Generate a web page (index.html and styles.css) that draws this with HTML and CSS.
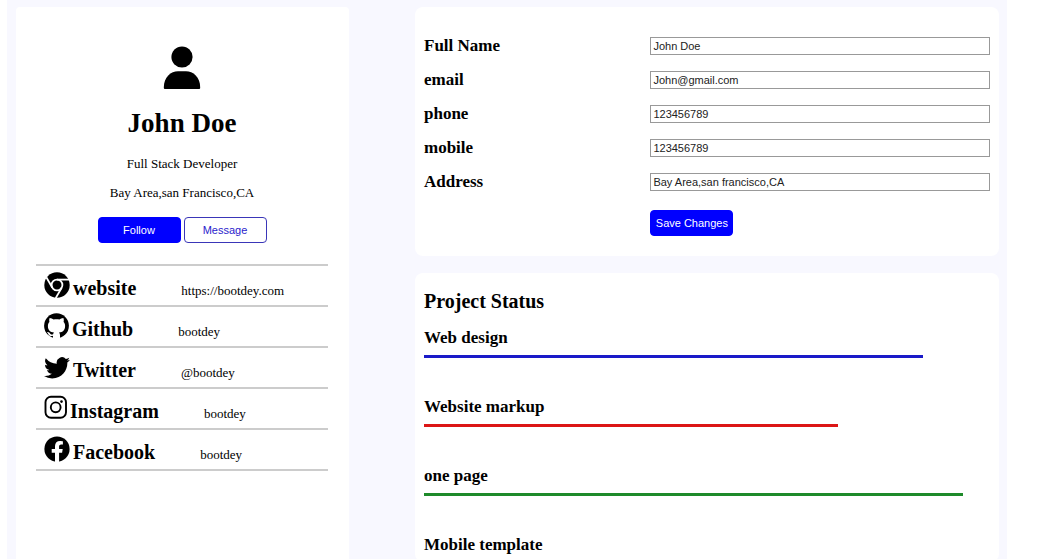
FILE: index.html
```html
<!DOCTYPE html>
<html lang="en">
<head>
<meta charset="utf-8">
<title>John Doe</title>
<link rel="stylesheet" href="styles.css">
</head>
<body>
<main class="page">
  <section class="card profile">
    <svg class="avatar" viewBox="0 0 38 44" aria-hidden="true"><circle cx="19" cy="11" r="10.6"/><path d="M.8 41.5C.8 31 8 25.3 15 25.3h8c7 0 14.200 5.700 14.200 16.200 0 1-.5 1.500-1.500 1.500H2.300C1.300 43 .8 42.500.8 41.500z"/></svg>
    <h1 class="name">John Doe</h1>
    <p class="line">Full Stack Developer</p>
    <p class="line">Bay Area,san Francisco,CA</p>
    <div class="actions">
      <button class="btn" type="button">Follow</button>
      <button class="btn btn-outline" type="button">Message</button>
    </div>
    <ul class="links">
      <li class="link-row">
        <svg class="icon" viewBox="0 0 26 26" aria-hidden="true"><circle cx="13" cy="13" r="12.700"/><g fill="none" stroke="#fff" stroke-width="1.800"><circle cx="13" cy="13" r="5.400"/><path d="M13 7.600h12"/><path d="M13 7.600h12" transform="rotate(120 13 13)"/><path d="M13 7.600h12" transform="rotate(240 13 13)"/></g></svg>
        <h2 class="site">website</h2><span class="value">https://bootdey.com</span>
      </li>
      <li class="link-row">
        <svg class="icon icon-github" viewBox="0 0 25 26" aria-hidden="true"><circle cx="12.500" cy="12.700" r="12.400"/><path fill="#fff" d="M9 26v-3.200c-2.500.6-3.900-.2-4.700-1.900-.4-.9-.9-1.400-1.500-1.900 2-.5 2.800.8 3.500 1.700.8 1 1.700 1 2.800.6.1-.8.5-1.400.9-1.800-3.800-.5-6.100-2.400-6.100-6.600 0-1.700.5-3 1.500-4-.4-1.300-.3-2.700.2-4 1.500 0 2.900.8 4 1.600 1.900-.5 3.900-.5 5.800 0 1.100-.8 2.500-1.600 4-1.600.5 1.300.6 2.700.2 4 1 1 1.500 2.300 1.500 4 0 4.200-2.300 6.100-6.100 6.600.6.600 1 1.600 1 2.800V26z"/></svg>
        <h2 class="site">Github</h2><span class="value">bootdey</span>
      </li>
      <li class="link-row">
        <svg class="icon" viewBox="0 0 16 16" aria-hidden="true"><path d="M5.026 15c6.038 0 9.341-5.003 9.341-9.334 0-.14 0-.282-.006-.422A6.685 6.685 0 0 0 16 3.542a6.658 6.658 0 0 1-1.889.518 3.301 3.301 0 0 0 1.447-1.817 6.533 6.533 0 0 1-2.087.793A3.286 3.286 0 0 0 7.875 6.030a9.325 9.325 0 0 1-6.767-3.429 3.289 3.289 0 0 0 1.018 4.382A3.323 3.323 0 0 1 .64 6.575v.045a3.288 3.288 0 0 0 2.632 3.218 3.203 3.203 0 0 1-.865.115 3.230 3.230 0 0 1-.614-.057 3.283 3.283 0 0 0 3.067 2.277A6.588 6.588 0 0 1 .78 13.580a6.320 6.320 0 0 1-.78-.045A9.344 9.344 0 0 0 5.026 15z"/></svg>
        <h2 class="site">Twitter</h2><span class="value">@bootdey</span>
      </li>
      <li class="link-row">
        <svg class="icon icon-narrow" viewBox="0 0 23 26" aria-hidden="true"><g fill="none" stroke="#000" stroke-width="1.900"><rect x="1.500" y="1.800" width="20.500" height="21" rx="5.500"/><circle cx="11.700" cy="12.300" r="4.900"/></g><circle cx="17.500" cy="6.600" r="1.300"/></svg>
        <h2 class="site">Instagram</h2><span class="value">bootdey</span>
      </li>
      <li class="link-row">
        <svg class="icon" viewBox="0 0 26 26" aria-hidden="true"><circle cx="13" cy="13" r="12.600"/><path fill="#fff" d="M11 26v-9.200H7.700V13H11v-2.900c0-3.300 2-5.100 5-5.100 1.400 0 2.900.3 2.900.3v3.200h-1.700c-1.600 0-2.100 1-2.100 2V13h3.600l-.6 3.800h-3V26z"/></svg>
        <h2 class="site">Facebook</h2><span class="value">bootdey</span>
      </li>
    </ul>
  </section>
  <div class="content">
    <form class="card details">
      <div class="field"><label class="label" for="name">Full Name</label><input class="input" id="name" type="text" value="John Doe"></div>
      <div class="field"><label class="label" for="email">email</label><input class="input" id="email" type="text" value="John@gmail.com"></div>
      <div class="field"><label class="label" for="phone">phone</label><input class="input" id="phone" type="text" value="123456789"></div>
      <div class="field"><label class="label" for="mobile">mobile</label><input class="input" id="mobile" type="text" value="123456789"></div>
      <div class="field"><label class="label" for="address">Address</label><input class="input" id="address" type="text" value="Bay Area,san francisco,CA"></div>
      <div class="field save"><button class="btn" type="button">Save Changes</button></div>
    </form>
    <section class="card status">
      <h2 class="title">Project Status</h2>
      <h3 class="task">Web design</h3>
      <div class="bar blue"></div>
      <h3 class="task">Website markup</h3>
      <div class="bar red"></div>
      <h3 class="task">one page</h3>
      <div class="bar green"></div>
      <h3 class="task">Mobile template</h3>
    </section>
  </div>
</main>
</body>
</html>
```
FILE: styles.css
```css
* {
  box-sizing: border-box;
}

body {
  margin: 0;
  background: #fff;
  color: #000;
  font-family: "Liberation Serif", "Times New Roman", serif;
}

h1, h2, h3, p, ul {
  margin: 0;
  padding: 0;
}

.page {
  display: grid;
  grid-template-columns: 333fr 584fr;
  gap: 66px;
  min-height: 100vh;
  margin: 0 5% 0 7px;
  padding: 7px 8px 0 9px;
  background: #f8f8ff;
}

.card {
  background: #fff;
  border-radius: 8px;
}

.profile {
  display: flex;
  flex-direction: column;
  align-items: center;
  padding: 39px 21px 0 20px;
  border-radius: 4px 4px 0 0;
}

.avatar {
  width: 38px;
  height: 44px;
}

.name {
  margin: 18px 0;
  font-size: 27px;
  line-height: 30px;
}

.line {
  margin-bottom: 13px;
  font-size: 13px;
  line-height: 16px;
}

.actions {
  display: flex;
  gap: 3px;
  margin: 3px 0 21px;
}

.btn {
  width: 83px;
  height: 26px;
  padding: 0;
  border: 1px solid #00f;
  border-radius: 4px;
  background: #00f;
  color: #fff;
  font-family: "Liberation Sans", Arial, sans-serif;
  font-size: 11px;
}

.btn-outline {
  border-color: #3a36b8;
  background: #fff;
  color: #2a22cc;
}

.links {
  width: 100%;
  border-top: 2px solid #ccc;
  list-style: none;
}

.link-row {
  display: flex;
  align-items: baseline;
  height: 41px;
  padding: 6px 8px 0;
  border-bottom: 2px solid #ccc;
}

.icon {
  flex: none;
  align-self: flex-start;
  width: 26px;
  height: 26px;
  margin-right: 3px;
}

.icon-github {
  width: 25px;
}

.icon-narrow {
  width: 23px;
}

.site {
  margin: 5px 45px 0 0;
  font-size: 20px;
  line-height: 22px;
}

.value {
  font-size: 13px;
}

.content {
  display: flex;
  flex-direction: column;
  gap: 17px;
}

.details {
  display: grid;
  gap: 14px;
  padding: 29px 9px 20px;
}

.field {
  display: grid;
  grid-template-columns: 2fr 3fr;
  align-items: center;
}

.label {
  font-size: 17px;
  font-weight: bold;
  line-height: 20px;
}

.input {
  width: 100%;
  height: 18px;
  padding: 0 2px;
  border: 1px solid #999;
  border-radius: 0;
  background: #fff;
  color: #222;
  font-family: "Liberation Sans", Arial, sans-serif;
  font-size: 11px;
}

.save .btn {
  grid-column: 2;
  margin-top: 4px;
}

.status {
  flex: 1;
  padding: 17px 8px 0 9px;
}

.title {
  margin-bottom: 16px;
  font-size: 20px;
  line-height: 22px;
}

.task {
  margin-bottom: 7px;
  font-size: 17px;
  line-height: 20px;
}

.bar {
  height: 3px;
  margin-bottom: 39px;
}

.blue {
  width: 88%;
  background: #1a1ac8;
}

.red {
  width: 73%;
  background: #dc1616;
}

.green {
  width: 95%;
  background: #1e8a2a;
}
```
